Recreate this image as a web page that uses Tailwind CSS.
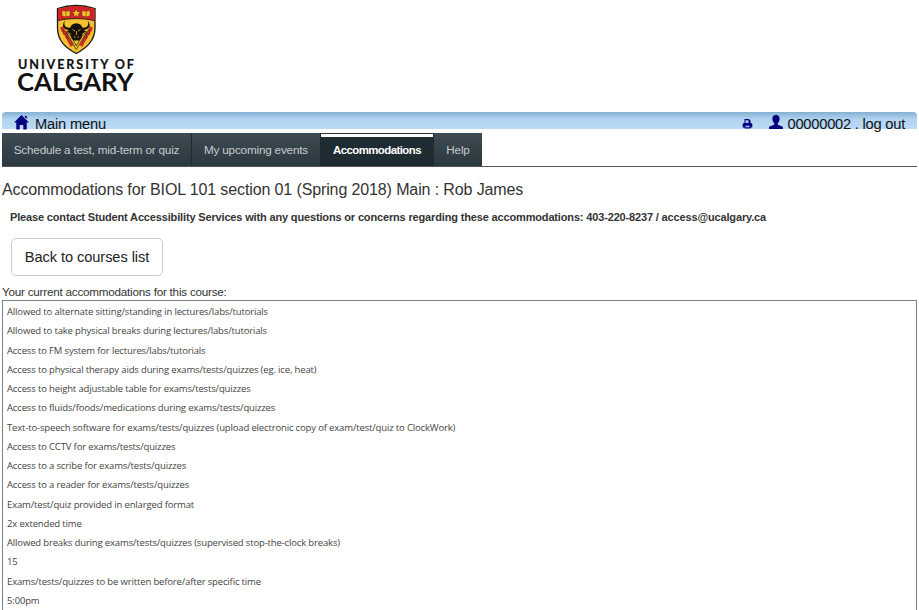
<!DOCTYPE html>
<html lang="en">
<head>
<meta charset="utf-8">
<title>Accommodations</title>
<script src="https://cdn.jsdelivr.net/npm/@tailwindcss/browser@4"></script>
</head>
<body class="h-[610px] overflow-hidden bg-white font-['Liberation_Sans',Arial,sans-serif] text-[#333]">
<header class="h-[112px] pl-[10px]">
  <svg class="block" width="134" height="100" viewBox="10 0 134 100" role="img" aria-label="University of Calgary">
    <path d="M57.500 8.500Q76 2.500 95 8.500V28C95 41 86 48 76.300 53.500C66 48 57.500 41 57.500 28Z" fill="#f2c230" stroke="#1d1715" stroke-width="1.300"/>
    <path d="M58 9Q76 3 94.500 9V20.500Q76 16.500 58 20.500Z" fill="#d42027"/>
    <path d="M58 20.500Q76 16.500 94.500 20.500" fill="none" stroke="#40200f" stroke-width="1"/>
    <g fill="#f2c230" stroke="#6e2414" stroke-width=".5">
      <path d="M62 10.500l4 .8 4-.8v5.500l-4 .8-4-.8zM82 10.500l4 .8 4-.8v5.500l-4 .8-4-.8zM66 11.500v5M86 11.500v5"/>
      <path d="M76.300 9l1.300 2.700 3 .3-2.200 2 .7 3-2.800-1.600-2.800 1.600.7-3-2.200-2 3-.3z"/>
    </g>
    <path d="M61.500 27l3.500 6 5 9 2 4M91.500 27l-3.500 6-5 9-2 4" fill="none" stroke="#cf2b22" stroke-width="3.400"/>
    <path d="M61 31l3-1-1 4 4 0-1 4 3 0M92 31l-3-1 1 4-4 0 1 4-3 0" fill="none" stroke="#7b2519" stroke-width=".8"/>
    <path d="M66 31.500L76.300 49.500 87 31.500L82 36L76.300 46L71 36Z" fill="#f2c230" stroke="#241b10" stroke-width=".7"/>
    <path d="M65 20.500c-2 5 1 7.500 5 7.200l1.800-3q4.500-3 9 0l1.800 3c4 .3 7-2.200 5-7.200 4 5 2 9-4 9.600l2.500 1.500-3.500 2-1.500 5-2 2h-5.500l-2-2-1.500-5-3.500-2 2.500-1.500c-6-.6-8-4.600-4.100-9.600z" fill="#17120f"/>
    <path d="M72.500 29.500l2.500 1.500M80.500 29.500l-2.500 1.500M74 37h1.500M77.500 37h1.500M76.500 31v4" stroke="#dca923" stroke-width=".9"/>
    <text x="18" y="69.300" textLength="116" lengthAdjust="spacing" font-family="Lato, sans-serif" font-weight="700" font-size="12.600" fill="#111" stroke="#111" stroke-width=".2">UNIVERSITY OF</text>
    <text x="17" y="91" textLength="116.500" lengthAdjust="spacingAndGlyphs" font-family="Lato, sans-serif" font-weight="700" font-size="24.800" fill="#111">CALGARY</text>
  </svg>
</header>

<div class="mx-[2px] flex h-[17px] items-start justify-between rounded-t-[4px] bg-linear-to-b from-[#84afd1] via-[#b0d2f0] via-40% to-[#bbdbf6] pr-[12px] pl-[12px] text-[14.700px] leading-[24px] whitespace-nowrap text-[#111]">
  <div class="flex">
    <svg class="mt-[3px] mr-[6px]" width="15" height="15" viewBox="0 0 15 15"><path d="M7.500 0L15 7.600H12.700V14.500H9.300V10H5.700V14.500H2.300V7.600H0L7.500 0M10.800 1h2v3l-2-2z" fill="#00007f"/></svg>
    <span class="tracking-[-0.2px]">Main menu</span>
  </div>
  <div class="flex">
    <svg class="mt-[7px] mr-[16px]" width="11" height="10" viewBox="0 0 11 10"><path d="M2.500 0h4.500l1.500 1.500V4h.8L10.300 5v3.500H8.500v1h-6v-1H.7V5l1-1h.8z" fill="#00007f"/><path d="M3.500 1.200h3v2.800h-3zM3.500 6.800h4v1.400h-4z" fill="#a9cdee"/></svg>
    <svg class="mt-[3px] mr-[4px]" width="14" height="15" viewBox="0 0 14 15"><path d="M7 0c2.500 0 3.600 1.500 3.600 3.700 0 2-.8 3.600-1.900 4.500v1.200c.7.900 5.300 1.300 5.300 3.300V14H0v-1.300c0-2 4.600-2.400 5.300-3.300V8.200c-1.100-.9-1.900-2.500-1.900-4.500C3.400 1.500 4.500 0 7 0z" fill="#00007f"/></svg>
    <span class="tracking-[-0.23px]">00000002 . log out</span>
  </div>
</div>

<nav class="mx-[2px] mt-[4px] flex h-[34px] border-b border-[#555] text-[11.700px] leading-[34px] tracking-[-0.18px] whitespace-nowrap text-[#c5cbcf]">
  <a class="w-[190px] border-r border-[#202a30] bg-linear-to-b from-[#3e4b53] to-[#2c383f] text-center">Schedule a test, mid-term or quiz</a>
  <a class="w-[129px] border-r border-[#202a30] bg-linear-to-b from-[#3e4b53] to-[#2c383f] text-center">My upcoming events</a>
  <a class="w-[112px] border-t border-[#333] bg-[#202c33] text-center font-bold text-white"><span class="block h-[32px] border-t-[3px] border-white text-[11.400px] leading-[27px] tracking-[-0.55px]">Accommodations</span></a>
  <a class="w-[49px] border-l border-[#202a30] bg-linear-to-b from-[#3e4b53] to-[#2c383f] text-center">Help</a>
</nav>

<main class="mx-[2px] whitespace-nowrap">
  <h1 class="mt-[12px] h-[22px] text-[16px] leading-[22px] tracking-[-0.12px]">Accommodations for BIOL 101 section 01 (Spring 2018) Main : Rob James</h1>
  <p class="mt-[9px] h-[16px] pl-[8px] text-[11px] leading-[15px] font-bold tracking-[-0.155px]">Please contact Student Accessibility Services with any questions or concerns regarding these accommodations: 403-220-8237 / access@ucalgary.ca</p>
  <button class="mt-[12px] ml-[9px] block h-[38px] w-[152px] rounded-[5px] border border-[#ccc] bg-white text-[14.600px] leading-[35px] tracking-[-0.06px] text-[#222]">Back to courses list</button>
  <p class="mt-[8px] h-[16px] text-[11.700px] leading-[16px] tracking-[-0.23px]">Your current accommodations for this course:</p>
  <ul class="h-[330px] w-[915px] border border-[#75838e] pt-[1px] pl-[4px] font-['Open_Sans','Noto_Sans',sans-serif] text-[9.500px] leading-[19.270px] tracking-[-0.15px] text-[#444]">
    <li>Allowed to alternate sitting/standing in lectures/labs/tutorials</li>
    <li>Allowed to take physical breaks during lectures/labs/tutorials</li>
    <li>Access to FM system for lectures/labs/tutorials</li>
    <li>Access to physical therapy aids during exams/tests/quizzes (eg. ice, heat)</li>
    <li>Access to height adjustable table for exams/tests/quizzes</li>
    <li>Access to fluids/foods/medications during exams/tests/quizzes</li>
    <li>Text-to-speech software for exams/tests/quizzes (upload electronic copy of exam/test/quiz to ClockWork)</li>
    <li>Access to CCTV for exams/tests/quizzes</li>
    <li>Access to a scribe for exams/tests/quizzes</li>
    <li>Access to a reader for exams/tests/quizzes</li>
    <li>Exam/test/quiz provided in enlarged format</li>
    <li>2x extended time</li>
    <li>Allowed breaks during exams/tests/quizzes (supervised stop-the-clock breaks)</li>
    <li>15</li>
    <li>Exams/tests/quizzes to be written before/after specific time</li>
    <li>5:00pm</li>
  </ul>
</main>
</body>
</html>
